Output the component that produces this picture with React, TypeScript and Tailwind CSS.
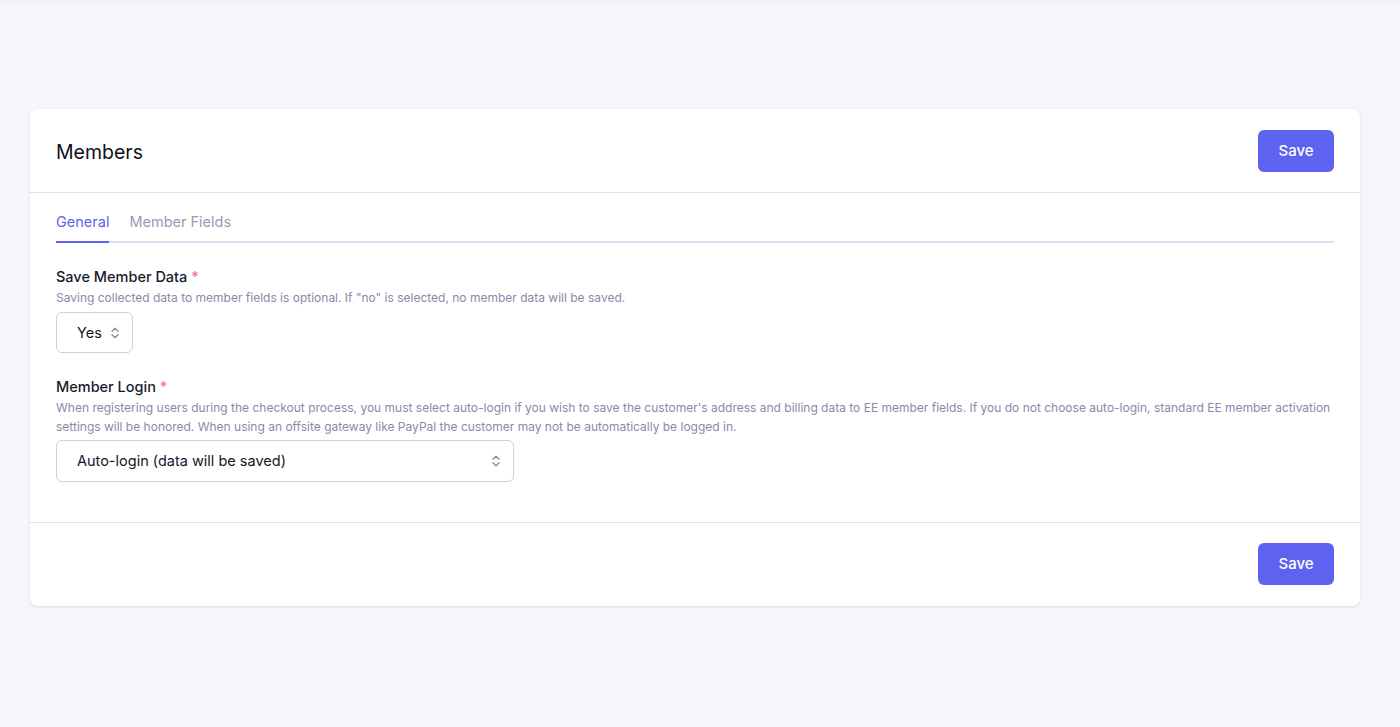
import React from "react";

function Chevrons() {
  return (
    <svg width="10" height="14" viewBox="0 0 10 14" fill="none" stroke="#8a8aa8" strokeWidth="1.4" strokeLinecap="round" strokeLinejoin="round">
      <path d="M2 5.2 L5 2.2 L8 5.2" />
      <path d="M2 8.8 L5 11.8 L8 8.8" />
    </svg>
  );
}

export default function App() {
  return (
    <div className="min-h-[727px] w-full bg-[#f6f6fa] font-['Inter',sans-serif] text-[#1c1c2e]">
      <div className="h-[3px] w-full bg-[#efeff4]" />
      <div className="pl-[30px] pr-[40px] pt-[106px]">
        <div className="rounded-lg bg-white shadow-[0_1px_3px_rgba(30,30,60,0.12)]">
          <div className="flex items-center justify-between border-b border-[#e0def0] px-[26px] pb-[20px] pt-[21px]">
            <h1 className="pt-[2px] text-[19.5px] font-normal leading-[28px] text-[#0f0f1a]">Members</h1>
            <button className="h-[42px] w-[76px] rounded-md bg-[#5d63f0] text-[15px] font-medium text-white">Save</button>
          </div>
          <div className="px-[26px] pb-[40px]">
            <div className="mt-[18px] flex gap-[20px] border-b-2 border-[#e0def0]">
              <div className="-mb-[2px] border-b-2 border-[#5d63f0] pb-[8px] text-[14.5px] leading-[22px] text-[#5d63f0]">General</div>
              <div className="pb-[8px] text-[14.5px] leading-[22px] text-[#9a98b8]">Member Fields</div>
            </div>
            <div className="mt-[24px]">
              <div className="text-[14.5px] font-medium leading-[20px] text-[#1a1a2a]">
                Save Member Data <span className="text-[#f07a8a]">*</span>
              </div>
              <p className="mt-[1px] text-[12px] leading-[19px] text-[#8b89a8]">
                Saving collected data to member fields is optional. If "no" is selected, no member data will be saved.
              </p>
              <div className="mt-[5px] flex h-[41px] w-[77px] items-center justify-between rounded-md border border-[#cfcde0] pl-[20px] pr-[12px] text-[14.5px] text-[#15152a]">
                <span>Yes</span>
                <Chevrons />
              </div>
            </div>
            <div className="mt-[24px]">
              <div className="text-[14.5px] font-medium leading-[20px] text-[#1a1a2a]">
                Member Login <span className="text-[#f07a8a]">*</span>
              </div>
              <p className="mt-[1px] text-[12px] leading-[19px] text-[#8b89a8]">
                When registering users during the checkout process, you must select auto-login if you wish to save the customer's address and billing data to EE member fields. If you do not choose auto-login, standard EE member activation settings will be honored. When using an offsite gateway like PayPal the customer may not be automatically be logged in.
              </p>
              <div className="mt-[4px] flex h-[42px] w-[458px] items-center justify-between rounded-md border border-[#cfcde0] pl-[20px] pr-[12px] text-[14.5px] text-[#15152a]">
                <span>Auto-login (data will be saved)</span>
                <Chevrons />
              </div>
            </div>
          </div>
          <div className="flex justify-end border-t border-[#e0def0] px-[26px] pb-[21px] pt-[20px]">
            <button className="h-[42px] w-[76px] rounded-md bg-[#5d63f0] text-[15px] font-medium text-white">Save</button>
          </div>
        </div>
      </div>
    </div>
  );
}
